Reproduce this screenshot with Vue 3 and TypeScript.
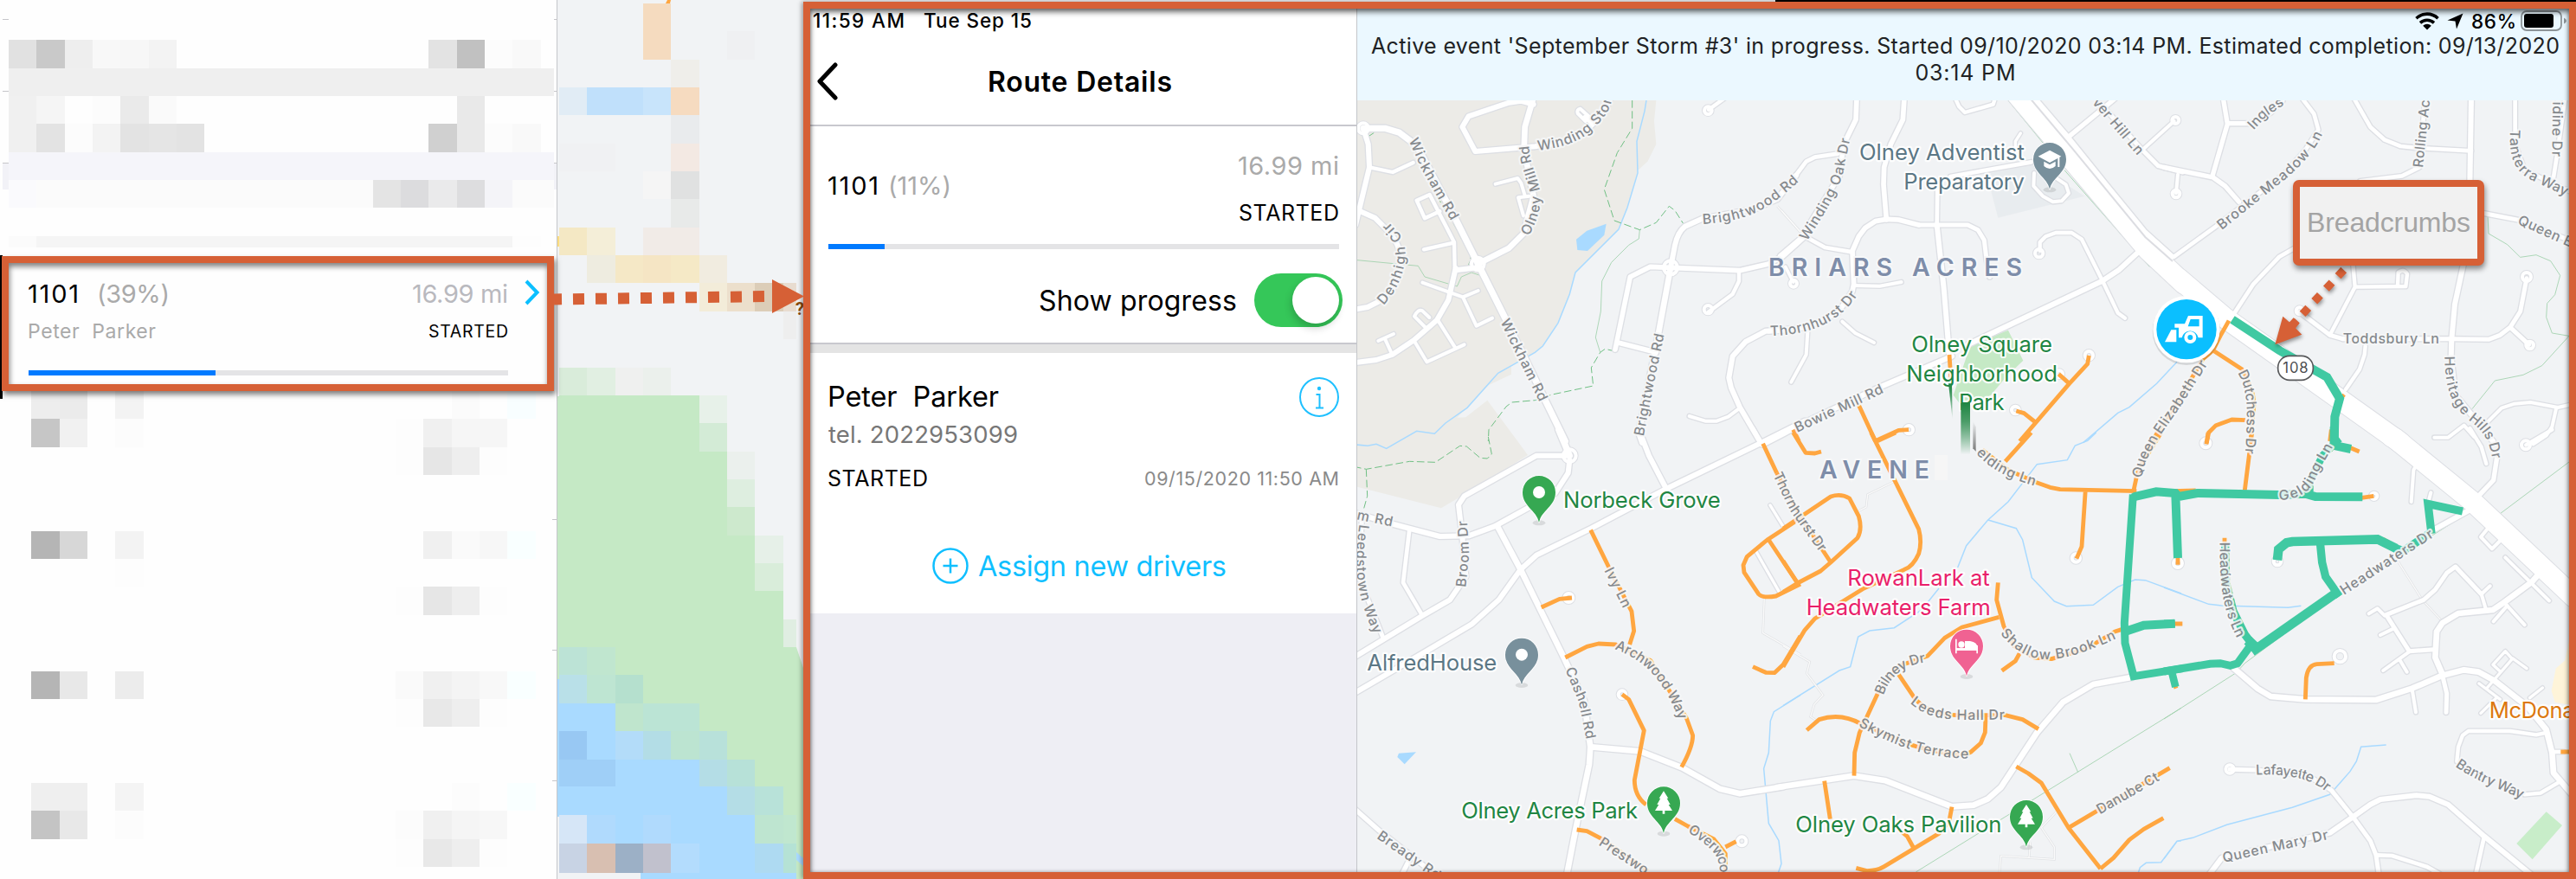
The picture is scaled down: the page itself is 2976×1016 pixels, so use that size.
<script setup lang="ts">
import type { Directive } from 'vue'

type Tile = 'A' | 'B' | 'C' | 'D' | 'E' | 'F'
type Cell = [number, number, number, number, string]

/* Tracks text so that its run is exactly `value` pixels wide. */
const vFit: Directive<HTMLElement, number> = {
  mounted(el, { value }) {
    const n = (el.textContent ?? '').length
    const gap = (value - el.getBoundingClientRect().width) / Math.max(1, n - 1)
    el.style.letterSpacing = `${gap}px`
    el.style.marginRight = `${-gap}px`
  },
}

/* Spreads a street name over the whole of the curve that carries it. */
const vAlong: Directive<SVGTextElement, string> = {
  mounted(el, { value }) {
    const line = document.getElementById(value) as unknown as SVGPathElement | null
    if (!line) return
    const n = (el.textContent ?? '').trim().length
    const gap = (line.getTotalLength() - el.getComputedTextLength()) / n
    el.style.letterSpacing = `${Math.max(-5, Math.min(6, gap))}px`
  },
}

/* The map is drawn in sheets, three units to a pixel. */
const origin: Record<Tile, [number, number]> = {
  A: [1560, 0], B: [2060, 0], C: [2500, 0],
  D: [1560, 500], E: [2060, 500], F: [2500, 500],
}
const at = (t: Tile) => `translate(${origin[t][0]} ${origin[t][1]}) scale(.33333)`

const roads: [Tile, number, string][] = [
  ['A', 22, 'M45,445L120,445 170,460 230,505 360,750 440,910 540,1110 745,1530'],
  ['A', 18, 'M45,445L62,500 66,580 30,730 18,780'],
  ['A', 13, 'M66,580L147,597 218,564'],
  ['A', 18, 'M24,728L85,755 130,800Q175,850 175,900Q170,960 145,1005L100,1045 60,1065 20,1072'],
  ['A', 20, 'M632,348L605,440 602,520 635,680 600,810 550,860 442,915'],
  ['A', 18, 'M635,362L590,350 550,356 410,403 388,440 433,525 640,508 760,490 830,440 880,390 900,345'],
  ['A', 12, 'M840,432L812,405M815,420L788,393 Q784,380 797,377L828,405'],
  ['A', 12, 'M503,638L580,618 592,635 605,678M620,680L582,685 600,748'],
  ['A', 18, 'M365,937L440,928'],
  ['A', 13, 'M362,930L360,840 275,675 230,695 258,757 310,733M255,865L358,842'],
  ['A', 18, 'M365,930L340,1040 300,1110 220,1180 145,1230 90,1248 20,1257'],
  ['A', 12, 'M250,980L390,1030 443,1008M390,1030L437,1130 492,1103M300,1105L365,1208M220,1180L265,1255 395,1195M262,1137L222,1097Q235,1070 250,1078L274,1101M143,1225L120,1175M97,1182L150,1158'],
  ['A', 18, 'M1110,928L1125,850Q1135,805 1160,785L1220,758 1400,725 1480,690 1545,608'],
  ['A', 17, 'M1110,928L1350,938 1450,915 1500,888 1570,825'],
  ['A', 17, 'M1110,928L1040,925 970,960 918,1212M925,1187L1060,1222'],
  ['A', 20, 'M1110,928L1060,1200 1000,1500 1012,1535'],
  ['A', 13, 'M1347,938L1347,975 1325,1020 1240,1083'],
  ['A', 13, 'M1242,380L1295,342'],
  ['A', 11, 'M1508,925L1535,978'],
  ['A', 18, 'M1500,1145L1440,1148 1370,1185 1325,1235 1312,1310 1320,1345 1350,1412 1425,1540'],
  ['A', 12, 'M1175,1443L1230,1460 1270,1460 1310,1445 1350,1415'],
  ['B', 14, 'M30,628L50,600 80,560 110,545 190,533'],
  ['B', 17, 'M-10,888L60,828 195,610 210,500 252,415 255,340'],
  ['B', 12, 'M85,1150L80,1230 28,1325M205,1115L250,1155 315,1188'],
  ['B', 17, 'M-50,1148L80,1135 190,1085 240,1010 245,985 240,870 262,820 285,790 320,767 360,760 400,762 470,780'],
  ['B', 15, 'M470,780L640,780 675,797 697,833 705,900 716,960'],
  ['B', 12, 'M245,990L335,992 410,978'],
  ['B', 14, 'M240,874L145,858 85,825'],
  ['B', 17, 'M358,762L348,640 350,580 373,500 415,415 420,340'],
  ['B', 14, 'M533,780L535,640M580,612L860,562'],
  ['B', 18, 'M533,780L557,1000 577,1240'],
  ['B', 13, 'M596,340L610,370 630,390 728,362 735,340'],
  ['B', 10, 'M805,510L805,490 823,462'],
  ['B', 12, 'M870,600L868,645 900,680 935,700 965,697 990,670 980,640 950,620'],
  ['B', 13, 'M890,870L890,840 910,820 945,807 1000,807 1035,830 1105,970 1160,1085 1185,1103'],
  ['B', 18, 'M-70,1541L0,1505 60,1472 340,1340 585,1235M640,1195L1105,975 1165,935 1230,875'],
  ['B', 16, 'M868,335L985,472 1120,640 1255,805 1350,890'],
  ['B', 16, 'M985,478L1150,342'],
  ['B', 15, 'M1100,360L1245,520 1300,575 1385,597'],
  ['C', 14, 'M25,892L35,890 180,785 420,600 490,520 535,450 520,395 478,340'],
  ['C', 16, 'M0,580L170,615 212,645 260,700M168,610L220,430 205,340M220,428L300,428 370,390 410,350'],
  ['C', 12, 'M-70,515L35,420M48,605L42,670'],
  ['C', 14, 'M655,335L715,440 765,485 820,507 880,513 1065,523'],
  ['C', 18, 'M1065,340L1060,640'],
  ['C', 14, 'M905,340L885,580 825,610 680,628'],
  ['C', 14, 'M1217,340L1217,500 1250,590 1410,665M1390,340L1362,540 1350,615'],
  ['C', 15, 'M1100,738L1230,763 1410,835'],
  ['C', 14, 'M450,862L400,890 310,985 238,1095'],
  ['C', 13, 'M655,915L662,995 575,1162M662,995L838,993 843,950Q830,930 812,945L810,990'],
  ['C', 15, 'M470,1082L575,1162 620,1175'],
  ['C', 15, 'M620,1175L1000,1175 1125,1177 1165,1162 1200,1135 1235,1080 1257,965M1200,1135L1265,1195'],
  ['C', 18, 'M1038,915L1008,1055 997,1175 995,1240 1010,1370 1080,1455 1140,1530'],
  ['C', 13, 'M698,1200L695,1230 678,1280 630,1350'],
  ['C', 12, 'M937,1517L985,1517 1040,1475 1075,1515M1110,1475L1170,1415 1215,1400 1270,1395 1365,1413 1410,1403M1360,1413L1345,1480 1325,1510 1280,1540'],
  ['D', 22, 'M760,80L722,-10'],
  ['D', 18, 'M760,80L645,80 395,220 375,250 388,360 400,500 345,580 250,635 15,778'],
  ['D', 18, 'M760,95L755,140 710,210 600,270 500,325 410,358 310,360 150,318 20,280'],
  ['D', 14, 'M205,335L183,520 250,635'],
  ['D', 15, 'M40,300L30,500 115,715'],
  ['D', 20, 'M510,325L590,475 740,780 810,930 832,1090 828,1150 780,1380 750,1535'],
  ['D', 18, 'M1575,-40L1425,35 1095,195 835,332 645,425 590,475 515,580 420,665 260,760 15,903M1000,-10L1035,80 1095,195'],
  ['D', 20, 'M835,1090L1005,1105 1150,1162 1280,1235 1350,1252 1500,1228'],
  ['D', 16, 'M15,1305L100,1380 290,1530M205,1480L180,1530'],
  ['D', 14, 'M1395,-15L1425,38'],
  ['D', 10, 'M1405,410L1485,550M1455,252L1500,325'],
  ['E', 20, 'M-20,1230L245,1190 355,1207 585,1297 660,1292 710,1270 755,1230 880,1040 970,935 1075,873 1210,848'],
  ['F', 16, 'M1155,80L1142,165 1090,220'],
  ['F', 13, 'M1255,43L1345,-10M1060,-15L1100,50 1117,108'],
  ['F', 12, 'M885,95L865,130 857,240M918,235L925,208'],
  ['F', 18, 'M930,340L1060,268'],
  ['F', 12, 'M1120,335L1098,362 1137,403 1165,375M1183,433L1335,583'],
  ['F', 20, 'M1295,495L1275,518 1180,588 1140,615 1020,627 965,660 945,690 940,780 965,838'],
  ['F', 12, 'M1180,590L1250,667M1190,600L1142,655M1115,610L1100,560M1100,560L1130,532M710,628L740,610 765,635M795,680L750,702M850,760L760,825M818,790L842,830'],
  ['F', 15, 'M1100,560L1010,465 980,487 940,545 900,580 770,632L850,758 935,752'],
  ['F', 20, 'M240,815L325,888 370,915 490,925 735,927 860,887 965,842 1040,823 1090,830 1145,860 1260,950 1325,1030 1345,1110 1350,1180 1410,1250'],
  ['F', 12, 'M860,890L873,970'],
  ['F', 15, 'M965,842L980,905 978,970'],
  ['F', 10, 'M1120,885L1207,785 1183,758 1140,805 1165,828M1207,782L1257,818M1092,870L1165,925M1098,973L1150,922M1268,920L1312,885'],
  ['F', 13, 'M1318,1042L1290,1048 1200,1035 1055,1035 1035,1050 1020,1090 1015,1140M1250,1255L1305,1250 1365,1215M1350,1107L1385,1107'],
  ['F', 15, 'M228,1168L320,1170 500,1190 580,1240 655,1333 715,1415 735,1465 745,1535'],
  ['F', 18, 'M155,1535L200,1475 575,1388 655,1333 715,1290 750,1272 875,1258 920,1262 985,1290 1110,1400 1275,1535'],
  ['F', 14, 'M735,1465L790,1467 910,1505 955,1530M1110,1400L1080,1535'],
]

const highway: [Tile, string][] = [
  ['B', 'M812,330L1265,868 1390,985'],
  ['C', 'M50,965L215,1105 610,1385 820,1535'],
  ['F', 'M790,15L800,20 1070,240 1420,570'],
]

/* Turning circles at the ends of cul-de-sacs and roundabouts: x, y, radius. */
const circles: [Tile, number, number, number][] = [
  ['A', 45, 445, 18], ['A', 442, 915, 22], ['A', 1110, 928, 24], ['A', 1240, 383, 13],
  ['A', 1240, 1073, 14], ['A', 1536, 983, 12], ['B', 887, 878, 14], ['B', 1060, 1232, 14],
  ['B', 436, 1490, 14], ['B', 957, 1297, 12], ['B', 805, 1422, 13], ['C', 40, 417, 12],
  ['C', 42, 672, 13], ['C', 470, 1078, 12], ['C', 1257, 960, 15], ['C', 1268, 1197, 13],
  ['D', 760, 80, 22], ['D', 757, 573, 15], ['D', 942, 908, 13], ['D', 1357, 1417, 15],
  ['E', 1015, 435, 14], ['F', 48, 453, 15], ['F', 393, 447, 13], ['F', 728, 220, 11],
  ['F', 145, 37, 15], ['F', 1254, 43, 15], ['F', 228, 1167, 14], ['F', 610, 776, 20],
]

const footpaths: [Tile, string][] = [
  ['A', 'M1480,715L1560,805'], ['B', 'M-5,730L65,810'],
  ['D', 'M1435,570L1430,695 1560,770'],
  ['E', 'M385,170L293,215 288,258 262,272M0,740L92,795 82,835 138,910 108,942 95,985 125,1005M750,1524L755,1468 940,1480 940,1437 895,1370 950,1312M852,1475L857,1420'],
  ['F', 'M810,445L895,580 960,650'],
]

const water: [Tile, string][] = [
  ['A', 'M1026,348L1020,385 993,490 996,600 960,720 930,795 780,945 760,1020 720,1120 667,1200 640,1222 512,1294 405,1414 330,1467 292,1504 230,1495 125,1555 90,1540 60,1546 20,1542'],
  ['B', 'M1365,1255L1295,1330 1200,1412 1160,1432 1040,1535'],
  ['D', 'M1560,910L1468,968 1456,1000 1450,1110 1433,1165 1450,1355 1485,1415 1494,1495 1482,1530'],
  ['E', 'M0,947L195,825 233,812 260,708 300,687 385,677 480,615 540,540M605,468L635,392 710,303 780,240 880,110 985,95 1012,45 1055,28 1085,0M710,303L808,332 830,372 862,503 940,585 982,602 1075,598 1160,535 1220,510 1255,512 1380,558M1380,1415L1365,1417 1310,1490 1258,1492 1237,1508 1230,1530'],
  ['F', 'M0,537L155,595 200,600 430,607 475,601M770,1083L683,1090 667,1140 645,1175 575,1255 445,1300 218,1360 100,1405 45,1417 0,1478'],
]

const trails: [Tile, string][] = [
  ['A', 'M977,348L977,445 925,530 880,657 915,765 1003,797 1060,772 1105,715 1125,730 1155,777M918,1218L883,1210 866,1222 835,1275 842,1338 700,1368 640,1388 560,1395 540,1410 480,1490 478,1530M60,475L90,455 130,458 165,470 205,500M300,680L355,770 418,890 410,920'],
  ['D', 'M478,15L490,75 475,90 450,88 403,48 380,46 295,103 205,100 55,127 22,120M55,127L59,220 45,270'],
]
const tracks: [Tile, string][] = [
  ['A', 'M1003,797L1000,828 965,850 905,910 872,975 868,1080 850,1170 866,1222M24,902L235,922 258,960 370,993 385,960 420,945 450,955 530,1115'],
  ['B', 'M780,348L900,495M975,590L1270,925'],
  ['C', 'M1122,745L1125,810 1190,848 1235,892 1290,884 1340,905 1373,955 1355,1022 1328,1052 1325,1100 1345,1155 1404,1165 1310,1268 1245,1300 1147,1320 1068,1418M190,1120L560,1372 590,1382'],
  ['E', 'M1380,955L460,1524M993,1112L1022,1178'],
  ['F', 'M1404,102L1160,285M1060,275L590,570 280,800 250,833 0,993M1165,378L1395,590'],
]

const route: [Tile, string][] = [
  ['B', 'M260,1400L320,1530M318,1530L400,1492 435,1490M35,1490L55,1530M576,1230L582,1320M1060,1233L1055,1262 992,1330 820,1530M955,1297L992,1330M808,1425L835,1433 878,1467'],
  ['C', 'M225,1112L195,1165 170,1215 135,1245 50,1390 -10,1480 -60,1560M170,1215L270,1280Q310,1350 312,1400L300,1530M282,1457L235,1455 180,1475 155,1500 148,1535M575,1530L580,1490M615,1370L625,1378'],
  ['D', 'M1430,38L1478,140M1540,310L1445,372 1375,430 1362,460 1365,485 1415,560Q1430,575 1475,567L1560,525M1450,372L1550,522M1560,705L1500,805 1470,833 1440,832 1395,812M833,338L895,465 975,620 983,688 968,735M745,780L820,742 860,732 920,735 1040,790 1165,990 1187,1050Q1187,1090 1148,1160M662,606L725,577 768,573M942,908L965,925 1018,1033 985,1205Q985,1260 1025,1290M1125,1340L1170,1365 1260,1410 1300,1460 1300,1520M1300,1437L1337,1418M785,1377L820,1382 870,1408 1030,1520'],
  ['E', 'M35,0L78,70 110,72 132,66M305,0L470,335Q482,380 470,420Q450,465 420,475L280,540 110,645 75,685 0,812M325,30L390,0M-22,140L60,290 165,450M0,333L165,222Q200,210 230,228L262,290Q275,335 258,365L165,450 130,480 50,522 0,553M0,445L50,522'],
  ['E', 'M770,100L860,0M690,60L780,130 870,170 925,190 960,197 1225,203M1048,197L1035,395 1017,437M1215,200L1230,130 1310,0M745,520L740,580 765,672 800,740 870,780 930,785 1050,750 1150,690 1175,682M748,640L620,675 560,712 500,775 400,810 330,900 265,1040 248,1110 246,1190M400,838L455,920Q500,975 600,980L770,980 830,995 885,1028M702,985L700,1040 685,1077 650,1108Q610,1130 450,1085L270,1010Q200,970 125,995L82,1032M820,765L805,792 758,826'],
  ['E', 'M143,1208L163,1340M585,1298L575,1350 540,1390 350,1505Q325,1520 290,1520L253,1510M452,1440L430,1400 400,1375M808,1158L850,1182 895,1215 990,1372 1100,1512M990,1370L1340,1163M1100,1512L1145,1475 1200,1412 1250,1375 1318,1337'],
  ['F', 'M153,0L147,40M305,0L280,200M677,66L640,50M685,226L727,220M30,203L110,201M48,425L48,458M210,365L210,390M35,663L64,663M490,925L493,850Q500,805 530,803L590,800M36,870L42,887M760,370L790,388M1375,1107L1410,1107'],
]

const breadcrumbs: [Tile, number, string][] = [
  ['C', 30, 'M237,1108L400,1215 565,1308 609,1382 592,1445 590,1535'],
  ['F', 30, 'M590,-20L590,45 648,57M590,20L605,40'],
  ['F', 26, 'M590,40L550,80 505,170 505,205'],
  ['F', 30, 'M-107,226L-100,222 -27,205 40,210 50,222 115,210 400,216 490,212 525,222 688,223M40,215L48,435'],
  ['E', 27, 'M1213,215L1183,660 1185,730 1215,845 1385,818'],
  ['E', 30, 'M1185,690L1250,668 1358,662'],
  ['E', 26, 'M1347,830L1360,882'],
  ['F', 27, 'M0,828L160,802 195,800 230,808 255,800 300,738M0,663L38,663'],
  ['F', 28, 'M212,385L215,520 240,620 280,700 318,750'],
  ['F', 36, 'M290,720L320,748'],
  ['F', 32, 'M305,760L603,552'],
  ['F', 28, 'M608,568L560,500 548,450 540,370'],
  ['F', 32, 'M393,442L397,405 425,382 445,378 740,370 805,402'],
  ['F', 28, 'M800,400L830,410 920,350M927,350L915,247 1035,273'],
]

const streets: [Tile, string, string][] = [
  ['A', 'Wickham Rd', 'M218,480L262,580 365,760'],
  ['A', 'Wickham Rd', 'M535,1108L672,1390'],
  ['A', 'Winding Stor', 'M648,505C740,495 800,470 840,425C870,395 885,370 890,340'],
  ['A', 'Olney Mill Rd', 'M604,812C640,740 650,700 635,640C620,590 605,560 602,505'],
  ['A', 'Denhigh Cir', 'M102,1048C160,990 195,880 160,825L118,778'],
  ['A', 'Brightwood Rd', 'M1220,760C1380,750 1440,710 1545,615'],
  ['A', 'Brightwood Rd', 'M1000,1510L1035,1330 1072,1155'],
  ['B', 'Winding Oak Dr', 'M68,828C130,730 190,640 198,560L216,478'],
  ['B', 'Thornhurst Dr', 'M-45,1148C80,1145 180,1110 245,1012'],
  ['B', 'Bowie Mill Rd', 'M42,1485L345,1345'],
  ['B', 'ver Hill Ln', 'M1083,345L1242,530'],
  ['F', 'Queen Elizabeth Dr', 'M-95,155L-78,90 -40,20 50,-110 138,-248'],
  ['C', 'Ingles', 'M298,440L345,390 410,348'],
  ['C', 'Brooke Meadow Ln', 'M190,785L420,600Q510,520 535,455'],
  ['C', 'Rolling Ac', 'M880,580L905,345'],
  ['C', 'Tanterra Way', 'M1217,450C1210,560 1240,595 1300,618L1400,665'],
  ['C', 'sidine Dr', 'M1365,325L1362,545'],
  ['C', 'Queen E', 'M1230,760L1415,842'],
  ['C', 'Toddsbury Ln', 'M620,1175L955,1175'],
  ['C', 'Dutchess Dr', 'M270,1285C310,1350 308,1430 298,1575'],
  ['C', 'Heritage Hills Dr', 'M990,1235C990,1340 1010,1400 1075,1450C1140,1500 1145,1540 1155,1590'],
  ['F', 'Gelding Ln', 'M398,217C480,215 500,180 520,130L572,38'],
  ['F', 'Headwaters Dr', 'M615,550L930,345'],
  ['F', 'Headwaters Ln', 'M210,380C212,520 215,600 268,705'],
  ['F', 'Lafayette Dr', 'M318,1170C420,1165 510,1180 572,1232'],
  ['F', 'Queen Mary Dr', 'M203,1475L570,1393'],
  ['F', 'Bantry Way', 'M1018,1143C1100,1200 1150,1210 1245,1255'],
  ['E', 'Danube Ct', 'M1090,1310L1298,1190'],
  ['E', 'Leeds Hall Dr', 'M450,925C520,985 570,980 770,978'],
  ['E', 'Skymist Terrace', 'M268,1003C380,1060 470,1110 645,1114'],
  ['E', 'Bilney Dr', 'M332,905C350,850 390,795 492,780'],
  ['E', 'Shallow Brook Ln', 'M765,685C850,790 930,800 1150,698'],
  ['E', 'elding Ln', 'M680,60C740,125 800,145 878,170'],
  ['E', 'Thornhurst Dr', 'M-20,140L40,265 140,405'],
  ['D', 'am Rd', 'M-5,278L150,310'],
  ['D', 'Leedstown Way', 'M48,320C25,480 40,560 98,695'],
  ['D', 'Broom Dr', 'M383,535L395,420 388,305'],
  ['D', 'Ivy Ln', 'M895,470L962,605'],
  ['D', 'Archwood Way', 'M922,735C1040,780 1100,850 1155,992'],
  ['D', 'Cashell Rd', 'M760,815L808,930 835,1062'],
  ['D', 'Overwoo', 'M1178,1370C1250,1420 1300,1450 1297,1525'],
  ['D', 'Prestwo', 'M868,1415L1030,1520'],
  ['D', 'Bready Rd', 'M100,1392L310,1540'],
]

/* Place names: sheet, text, left, right, baseline, colour. */
const places: [Tile, string, number, number, number, string][] = [
  ['B', 'Olney Adventist', 264, 837, 556, '#5b7785'],
  ['B', 'Preparatory', 418, 837, 656, '#5b7785'],
  ['B', 'Olney Square', 445, 933, 1221, '#1f8643'],
  ['B', 'Neighborhood', 427, 951, 1322, '#1f8643'],
  ['B', 'Park', 609, 767, 1421, '#1f8643'],
  ['D', 'Norbeck Grove', 738, 1283, 261, '#1f8643'],
  ['D', 'AlfredHouse', 58, 508, 824, '#5b7785'],
  ['D', 'Olney Acres Park', 385, 996, 1338, '#1f8643'],
  ['E', 'Olney Oaks Pavilion', 43, 757, 1386, '#1f8643'],
  ['E', 'RowanLark at', 223, 716, 531, '#e9206a'],
  ['E', 'Headwaters Farm', 80, 719, 632, '#e9206a'],
  ['F', 'McDona', 1127, 1424, 989, '#dc780e'],
]

const pins: [Tile, number, number, string, string][] = [
  ['D', 654, 207, '#36a852', 'dot'],
  ['D', 594, 770, '#78909c', 'dot'],
  ['D', 1086, 1285, '#36a852', 'tree'],
  ['E', 843, 1332, '#36a852', 'tree'],
  ['E', 636, 740, '#f06292', 'bed'],
  ['B', 924, 552, '#78909c', 'school'],
]

/* Redacted blocks: left, top, width, height, colour. */
const topCells: Cell[] = [
  [10, 46, 32, 33, '#e1e1e1'], [42, 46, 33, 33, '#c9c9c9'], [75, 46, 32, 33, '#eeeeee'], [107, 46, 32, 33, '#f8f8f8'],
  [139, 46, 33, 33, '#f7f7f7'], [172, 46, 32, 33, '#f3f3f3'], [495, 46, 33, 33, '#e3e3e3'], [528, 46, 32, 33, '#c1c1c1'],
  [560, 46, 32, 33, '#fcfcfc'], [592, 46, 33, 33, '#f9f9f9'],
  [10, 79, 630, 32, '#efefef'],
  [10, 111, 32, 65, '#f0f0f0'], [42, 111, 33, 32, '#f5f5f5'], [107, 111, 32, 32, '#fcfcfc'], [139, 111, 33, 32, '#eaeaea'],
  [172, 111, 32, 32, '#fafafa'], [528, 111, 32, 65, '#e9e9e9'],
  [42, 143, 33, 33, '#e3e3e3'], [75, 143, 32, 33, '#fcfcfc'], [107, 143, 32, 33, '#f3f3f3'], [139, 143, 33, 33, '#e3e3e3'],
  [172, 143, 32, 33, '#e5e5e5'], [204, 143, 32, 33, '#e3e3e3'], [495, 143, 33, 33, '#d0d0d0'],
  [560, 143, 32, 33, '#fcfcfc'], [592, 143, 33, 33, '#f9f9f9'],
  [3, 189, 7, 30, '#f2f2f7'], [640, 189, 3, 30, '#f2f2f7'],
  [10, 176, 630, 32, '#f5f5fa'],
  [10, 208, 32, 32, '#fafafd'], [42, 208, 389, 32, '#fbfbfb'], [431, 208, 32, 32, '#e4e4e4'], [463, 208, 32, 32, '#dcdcde'],
  [495, 208, 33, 32, '#eaeaeb'], [528, 208, 32, 32, '#dddddf'], [560, 208, 32, 32, '#f4f4f8'], [592, 208, 48, 32, '#fbfbfb'],
  [10, 273, 32, 13, '#fbfbfb'], [42, 273, 550, 13, '#f5f5f5'], [592, 273, 33, 13, '#fdfdfd'],
  [3, 22, 7, 1, '#c6c6ca'], [3, 105, 7, 1, '#c6c6ca'], [3, 188, 7, 1, '#c6c6ca'],
  [640, 22, 4, 1, '#c6c6ca'], [640, 105, 4, 1, '#c6c6ca'], [640, 188, 4, 1, '#c6c6ca'],
  [0, 295, 3, 1, '#000'],
]
const bottomCells: Cell[] = [
  [0, 452, 3, 9, '#000'],
  [36, 452, 33, 32, '#ededed'], [69, 452, 32, 32, '#ebebeb'], [133, 452, 33, 32, '#f3f3f3'], [522, 452, 32, 32, '#fbfbfb'], [586, 452, 33, 32, '#f8feff'],
  [36, 484, 33, 33, '#c6c6c6'], [69, 484, 32, 33, '#f1f1f1'], [133, 484, 33, 33, '#fcfcfc'],
  [457, 484, 32, 65, '#fdfdfd'], [489, 484, 33, 33, '#f0f0f0'], [522, 484, 32, 33, '#f6f6f6'], [554, 484, 32, 33, '#f6f6f6'],
  [489, 517, 33, 32, '#e6e6e6'], [522, 517, 32, 32, '#eeeeee'], [554, 517, 32, 32, '#fdfdfd'],
  [36, 614, 33, 32, '#b5b5b5'], [69, 614, 32, 32, '#d7d7d7'], [133, 614, 33, 32, '#f3f3f3'],
  [489, 614, 33, 32, '#f0f0f0'], [522, 614, 32, 32, '#fafafa'], [554, 614, 32, 32, '#f7f7f7'], [586, 614, 33, 32, '#f9ffff'],
  [133, 646, 33, 32, '#fdfdfd'],
  [457, 678, 32, 33, '#fdfdfd'], [489, 678, 33, 33, '#e6e6e6'], [522, 678, 32, 33, '#eeeeee'], [554, 678, 32, 33, '#fdfdfd'],
  [36, 776, 33, 32, '#b5b5b5'], [69, 776, 32, 32, '#e8e8e8'], [133, 776, 33, 32, '#ececec'],
  [457, 776, 32, 32, '#fafafa'], [489, 776, 33, 32, '#f0f0f0'], [522, 776, 32, 32, '#f4f4f4'], [554, 776, 32, 32, '#f8f8f8'], [586, 776, 33, 32, '#f9ffff'],
  [457, 808, 32, 32, '#fdfdfd'], [489, 808, 33, 32, '#e8e8e8'], [522, 808, 32, 32, '#eeeeee'], [554, 808, 32, 32, '#fdfdfd'],
  [36, 905, 33, 32, '#efefef'], [69, 905, 32, 32, '#efefef'], [133, 905, 33, 32, '#f4f4f4'], [522, 905, 32, 32, '#fcfcfc'], [586, 905, 33, 32, '#f9ffff'],
  [36, 937, 33, 33, '#c4c4c4'], [69, 937, 32, 33, '#e8e8e8'], [133, 937, 33, 33, '#fcfcfc'],
  [457, 937, 32, 33, '#fcfcfc'], [489, 937, 33, 33, '#f0f0f0'], [522, 937, 32, 33, '#f5f5f5'], [554, 937, 32, 33, '#f7f7f7'],
  [457, 970, 32, 32, '#fdfdfd'], [489, 970, 33, 32, '#e8e8e8'], [522, 970, 32, 32, '#eeeeee'], [554, 970, 32, 32, '#fdfdfd'],
  [638, 600, 6, 1, '#c6c6ca'], [638, 751, 6, 1, '#c6c6ca'], [638, 902, 6, 1, '#c6c6ca'],
]

/* Pixelated overview map: column, row, columns, rows, colour. */
const colX = [646, 678, 711, 743, 775, 808, 840, 872, 905, 920]
const rowY = [4, 36, 69, 101, 133, 166, 198, 230, 263, 295, 327, 360, 392, 425, 457, 489, 522, 554, 586, 619, 651, 683, 716, 748, 780, 813, 845, 878, 909, 942, 975, 1009]
const pixels: Cell[] = [
  [3, 0, 1, 2, '#f5dbbf'], [6, 1, 1, 1, '#eff0f2'], [4, 2, 1, 1, '#efeeea'],
  [0, 3, 1, 1, '#e1ecf5'], [1, 3, 2, 1, '#c0e0fb'], [3, 3, 1, 1, '#c8e4fb'], [4, 3, 1, 1, '#f6dbc0'],
  [4, 4, 1, 1, '#e9ebed'], [0, 5, 2, 1, '#f0f1f3'], [4, 5, 1, 1, '#f3e9e3'], [3, 6, 1, 1, '#f5f5f5'], [4, 6, 1, 1, '#e0e1e1'], [4, 7, 1, 1, '#e8eae9'],
  [0, 8, 1, 1, '#f4e8c4'], [1, 8, 1, 1, '#f4eed8'], [3, 8, 2, 1, '#f1ebe7'],
  [1, 9, 1, 1, '#eeece0'], [2, 9, 1, 1, '#f5e8c6'], [3, 9, 1, 1, '#f5e5c4'], [4, 9, 1, 1, '#f5e9c6'], [5, 9, 1, 1, '#f1ece0'],
  [5, 10, 1, 1, '#f3ecd9'], [6, 10, 1, 1, '#ecdfcc'], [7, 10, 1, 1, '#dccdb8'], [8, 10, 1, 1, '#e8dcd0'], [8, 11, 1, 1, '#eeeeee'],
  [0, 13, 1, 1, '#d9ecda'], [1, 13, 1, 1, '#e1efe2'], [2, 13, 1, 1, '#eff0ef'], [3, 13, 1, 1, '#ebf0ec'],
  [0, 14, 5, 17, '#c5e9c5'], [5, 16, 1, 15, '#c5e9c5'], [6, 19, 1, 12, '#c5e9c5'], [7, 21, 1, 10, '#c5e9c5'], [8, 23, 1, 8, '#c5e9c5'],
  [5, 14, 1, 1, '#e7f1e9'], [5, 15, 1, 1, '#d3ebd6'], [6, 16, 1, 1, '#ebf0ed'], [6, 17, 1, 1, '#deeee0'], [6, 18, 1, 1, '#cde9cd'],
  [7, 19, 1, 1, '#e6f0e8'], [7, 20, 1, 1, '#d9edda'], [8, 22, 1, 1, '#e0eee2'],
  [0, 25, 2, 6, '#a9daff'], [2, 26, 1, 5, '#a9daff'], [3, 27, 2, 4, '#a9daff'], [5, 28, 1, 3, '#a9daff'], [6, 29, 1, 2, '#a9daff'],
  [0, 23, 1, 1, '#bce3d6'], [1, 23, 1, 1, '#c0e6cf'], [0, 24, 1, 1, '#b9e0e8'], [1, 24, 1, 1, '#bee5d2'], [2, 24, 1, 1, '#b5e0ce'],
  [2, 25, 1, 1, '#bfe5cd'], [3, 25, 2, 1, '#bbe4d5'], [0, 26, 1, 1, '#98c8f3'], [2, 26, 1, 1, '#b3dcf9'], [3, 26, 1, 1, '#b3dde6'],
  [4, 26, 1, 1, '#bce4d1'], [5, 26, 1, 1, '#b8e1da'], [0, 27, 2, 1, '#9fcff7'], [5, 27, 1, 1, '#b4dde6'], [6, 27, 1, 1, '#b7e1d8'],
  [6, 28, 1, 1, '#b4dde6'], [7, 28, 1, 1, '#b8e2d9'], [0, 29, 1, 1, '#d6e6f7'], [1, 29, 1, 1, '#b0dafd'], [3, 29, 1, 1, '#b0dafd'],
  [7, 29, 1, 1, '#bee5d0'], [8, 29, 1, 1, '#c0e7cf'], [0, 30, 1, 1, '#c8d3e4'], [1, 30, 1, 1, '#d8bfb1'], [2, 30, 1, 1, '#9cb0c6'],
  [3, 30, 1, 1, '#c1c1cd'], [4, 30, 1, 1, '#b3dcfd'], [7, 30, 1, 1, '#aedaf2'], [8, 30, 1, 1, '#b5e2d5'],
]
</script>

<template>
  <main class="page">
    <section class="list">
      <svg class="blocks" width="644" height="296" viewBox="0 0 644 296" shape-rendering="crispEdges">
        <rect v-for="(c, i) in topCells" :key="i" :x="c[0]" :y="c[1]" :width="c[2]" :height="c[3]" :fill="c[4]" />
      </svg>
      <div class="picked-row">
        <article class="picked">
          <div class="picked-line first">
            <p><span v-fit="59" class="route-id">1101</span><span v-fit="84" class="percent">(39%)</span></p>
            <span v-fit="111" class="miles">16.99 mi</span>
            <svg class="go" width="18" height="30" viewBox="0 0 18 30"><path d="M2,2L14.500,15 2,28" /></svg>
          </div>
          <div class="picked-line second">
            <span v-fit="148" class="driver">Peter&nbsp; Parker</span>
            <span v-fit="92" class="state">STARTED</span>
          </div>
          <div class="bar"><i :style="{ width: '39%' }"></i></div>
        </article>
      </div>
      <svg class="blocks" width="644" height="564" viewBox="0 452 644 564" shape-rendering="crispEdges">
        <rect v-for="(c, i) in bottomCells" :key="i" :x="c[0]" :y="c[1]" :width="c[2]" :height="c[3]" :fill="c[4]" />
      </svg>
    </section>

    <svg class="overview" width="284" height="1016" viewBox="644 0 284 1016">
      <g shape-rendering="crispEdges">
        <rect v-for="(c, i) in pixels" :key="i" :x="colX[c[0]]" :y="rowY[c[1]]"
          :width="colX[c[0] + c[2]] - colX[c[0]]" :height="rowY[c[1] + c[3]] - rowY[c[1]]" :fill="c[4]" />
        <rect x="644" y="458" width="2" height="327" fill="#c5e9c5" />
        <rect x="644" y="785" width="2" height="159" fill="#a9daff" />
        <rect x="644" y="273" width="2" height="12" fill="#fbdc80" />
        <rect x="740" y="1009" width="188" height="7" fill="#a9daff" />
      </g>
      <path d="M920,748L928,772V1016H920Z" fill="#c5e9c5" />
      <path d="M920,985L928,992V1001L920,994Z" fill="#a9daff" />
      <path d="M769,4L771,0H775L774,4Z" fill="#ffa640" />
      <text x="919" y="364" class="scrap">?</text>
    </svg>

    <section class="detail">
      <div class="strip"></div>
      <div class="frame">
        <aside class="panel">
          <header class="clock">
            <span v-fit="106">11:59 AM</span><span v-fit="125" class="date">Tue Sep 15</span>
          </header>
          <nav class="title">
            <svg class="back" width="26" height="44" viewBox="0 0 26 44"><path d="M22,3L4,22 22,41" /></svg>
            <h1 v-fit="213">Route Details</h1>
          </nav>
          <div class="summary">
            <p><span v-fit="59" class="route-id">1101</span><span v-fit="73" class="percent">(11%)</span></p>
            <div class="numbers">
              <span v-fit="117" class="miles">16.99 mi</span>
              <span v-fit="116" class="state">STARTED</span>
            </div>
          </div>
          <div class="bar"><i :style="{ width: '11%' }"></i></div>
          <label class="toggle-row">
            <span v-fit="229">Show progress</span>
            <span class="toggle"><b></b></span>
          </label>
          <div class="gap"></div>
          <div class="card">
            <div class="who">
              <span v-fit="198">Peter&nbsp; Parker</span>
              <svg width="46" height="46" viewBox="0 0 46 46" class="info">
                <circle cx="23" cy="23" r="22" />
                <circle cx="23" cy="13" r="2.200" class="point" />
                <path d="M19.500,20H23.500V35.500M19,35.500H28" />
              </svg>
            </div>
            <div class="tel"><span v-fit="219">tel. 2022953099</span></div>
            <div class="when">
              <span v-fit="116" class="state">STARTED</span>
              <span v-fit="225" class="stamp">09/15/2020 11:50 AM</span>
            </div>
            <div class="assign">
              <svg width="42" height="42" viewBox="0 0 42 42"><circle cx="21" cy="21" r="19.500" /><path d="M12.500,21H29.500M21,12.500V29.500" /></svg>
              <span v-fit="287">Assign new drivers</span>
            </div>
          </div>
        </aside>

        <div class="map-side">
          <header class="banner">
            <div class="tray">
              <svg width="28" height="21" viewBox="0 0 28 21">
                <g fill="none" stroke="#000" stroke-width="3.600"><path d="M1.500,7.200A18,18 0 0 1 26.500,7.200" /><path d="M6,12.300A12,12 0 0 1 22,12.300" /></g>
                <path d="M14,20.500L9.200,15.700A7,7 0 0 1 18.800,15.700Z" />
              </svg>
              <svg width="19" height="19" viewBox="0 0 19 19"><path d="M18.500,.5L11,18.500 9.500,9.500 .5,8.500Z" /></svg>
              <span v-fit="52">86%</span>
              <svg width="54" height="24" viewBox="0 0 54 24">
                <rect x="1" y="1" width="46" height="22" rx="6" fill="none" stroke="#8d9498" stroke-width="1.800" />
                <rect x="4" y="4" width="34" height="16" rx="3" />
                <path d="M50,8.500Q53,10 53,12T50,15.500Z" fill="#8d9498" />
              </svg>
            </div>
            <p><span v-fit="1373">Active event 'September Storm #3' in progress. Started 09/10/2020 03:14 PM. Estimated completion: 09/13/2020</span></p>
            <p><span v-fit="116">03:14 PM</span></p>
          </header>

          <svg class="map" width="1400" height="892" viewBox="1568 116 1400 892">
            <defs>
              <linearGradient id="smear" x1="0" y1="0" x2="0" y2="1"><stop offset="0" stop-color="#1f8643" /><stop offset=".35" stop-color="#4a9c67" /><stop offset="1" stop-color="#1f8643" stop-opacity="0" /></linearGradient>
              <linearGradient id="smear-grey" x1="0" y1="0" x2="0" y2="1"><stop offset="0" stop-color="#777" stop-opacity="0" /><stop offset="1" stop-color="#777" /></linearGradient>
              <path v-for="(s, i) in streets" :id="'street-' + i" :key="i" :d="s[2]" />
            </defs>
            <rect x="1568" y="116" width="1400" height="892" fill="#f1f3f5" />
            <path :transform="at('A')" fill="#ecebe7" d="M24,348H1060L1053,420 1060,500 1030,560 997,590 960,720 930,795 780,945 760,1020 720,1120 667,1200 620,1235 558,1265V1298L480,1335 370,1448 400,1447 475,1388 580,1530 615,1578 470,1670 315,1762 24,1688Z" />
            <path :transform="at('B')" fill="#e8ecef" d="M720,660L720,600 870,570 1045,680 745,755Z" />
            <path :transform="at('B')" fill="#c5e9c5" d="M650,1195L780,1145 832,1250 770,1310 720,1370 620,1410 590,1370Z" />
            <path :transform="at('F')" fill="#fef4d9" d="M1410,690L1390,790 1358,818 1343,895 1355,935 1410,945Z" />
            <path :transform="at('F')" fill="#c8edc9" d="M1325,1315L1380,1362 1277,1480 1222,1425Z" />
            <path :transform="at('A')" fill="#a9daff" d="M783,830L820,800 887,776 880,815 822,870 787,867Z" />
            <path :transform="at('D')" fill="#a9daff" d="M168,1112L228,1108 188,1150 163,1125Z" />
            <g class="water"><path v-for="(p, i) in water" :key="i" :transform="at(p[0])" :d="p[1]" /></g>
            <g class="tracks"><path v-for="(p, i) in tracks" :key="i" :transform="at(p[0])" :d="p[1]" /></g>
            <g class="trails"><path v-for="(p, i) in trails" :key="i" :transform="at(p[0])" :d="p[1]" /></g>
            <g class="foot-edge"><path v-for="(p, i) in footpaths" :key="i" :transform="at(p[0])" :d="p[1]" /></g>
            <g class="foot"><path v-for="(p, i) in footpaths" :key="i" :transform="at(p[0])" :d="p[1]" /></g>
            <g class="casing">
              <path v-for="(p, i) in roads" :key="i" :transform="at(p[0])" :stroke-width="p[1] + 8" :d="p[2]" />
              <circle v-for="(c, i) in circles" :key="'c' + i" :transform="at(c[0])" :cx="c[1]" :cy="c[2]" :r="c[3]" stroke-width="18" />
              <path v-for="(p, i) in highway" :key="'h' + i" :transform="at(p[0])" stroke-width="76" :d="p[1]" />
            </g>
            <g class="surface">
              <path v-for="(p, i) in highway" :key="'h' + i" :transform="at(p[0])" stroke-width="70" :d="p[1]" />
              <path v-for="(p, i) in roads" :key="i" :transform="at(p[0])" :stroke-width="p[1]" :d="p[2]" />
              <circle v-for="(c, i) in circles" :key="'c' + i" :transform="at(c[0])" :cx="c[1]" :cy="c[2]" :r="c[3]" stroke-width="12" />
            </g>
            <g class="median"><path :transform="at('B')" d="M851,335L1000,512 1255,822 1350,906" /></g>
            <g class="route"><path v-for="(p, i) in route" :key="i" :transform="at(p[0])" :d="p[1]" /></g>
            <g class="crumbs"><path v-for="(p, i) in breadcrumbs" :key="i" :transform="at(p[0])" :stroke-width="p[1]" :d="p[2]" /></g>

            <g class="streets">
              <text v-for="(s, i) in streets" :key="i" v-along="'street-' + i" :transform="at(s[0])" dy=".35em"><textPath :href="'#street-' + i">{{ s[1] }}</textPath></text>
            </g>
            <g class="areas">
              <text x="2043" y="318.500" textLength="293">BRIARS ACRES</text>
              <text x="2102" y="552.500" textLength="127">AVENE</text>
            </g>
            <rect x="2235" y="526" width="15" height="29" fill="#f6f6f6" />
            <g class="places">
              <text v-for="(p, i) in places" :key="i" :transform="at(p[0])" :x="p[2]" :y="p[4]" :textLength="p[3] - p[2]" :fill="p[5]">{{ p[1] }}</text>
            </g>
            <path :transform="at('B')" fill="url(#smear)" d="M573,1330H585L587,1455Z" />
            <rect :transform="at('B')" x="616" y="1398" width="32" height="178" fill="url(#smear)" />
            <path :transform="at('B')" fill="url(#smear-grey)" d="M658,1460L668,1480V1565L658,1555Z" />

            <g v-for="(p, i) in pins" :key="'p' + i" :transform="at(p[0]) + ` translate(${p[1]} ${p[2]})`">
              <ellipse cy="106" rx="22" ry="9" fill="#000" opacity=".1" />
              <path d="M0,105C-8,62 -57,50 -57,0A57,57 0 1 1 57,0C57,50 8,62 0,105Z" :fill="p[3]" stroke="#fff" stroke-width="5" paint-order="stroke" />
              <circle v-if="p[4] === 'dot'" r="21" fill="#fff" />
              <path v-else-if="p[4] === 'tree'" fill="#fff" d="M0,-42L16,-17H11L23,5H17L30,26H4V37H-4V26H-30L-17,5H-23L-11,-17H-16Z" />
              <g v-else-if="p[4] === 'bed'" fill="#fff">
                <path d="M-39,-24H-34V15H34V26H39V-2H34V8H-34V26H-39Z" /><circle cx="-18" cy="-5" r="11" /><path d="M-34,8H39V15H-34ZM-6,-17H12Q37,-14 39,8H-6Z" />
              </g>
              <g v-else fill="#fff">
                <path d="M0,-31L40,-10 0,12 -40,-10Z" /><path d="M-20,8L0,19 20,8V24Q0,42 -20,24Z" /><path d="M28,-6H34V27H28Z" />
              </g>
            </g>

            <g :transform="at('C')">
              <rect x="395" y="1234" width="122" height="84" rx="40" fill="#fff" stroke="#58595b" stroke-width="5" />
              <text x="456" y="1294" class="shield" textLength="88">108</text>
            </g>
            <g :transform="at('C')" class="plow">
              <circle cx="78" cy="1148" r="118" fill="#000" opacity=".12" />
              <circle cx="78" cy="1142" r="116" fill="#fff" />
              <circle cx="78" cy="1142" r="104" fill="#0bbfff" />
              <path fill="#fff" d="M3,1186L25,1144H43V1186Z" />
              <path fill="#fff" fill-rule="evenodd" d="M37,1123H72L84,1095H134V1171H119A29,29 0 0 0 62,1171H51V1136H37ZM83,1132H122V1107H92Z" />
              <circle cx="91" cy="1170" r="15" fill="none" stroke="#fff" stroke-width="12" />
            </g>

            <g :transform="at('C')" class="pointer">
              <path d="M623,936L440,1132" stroke-width="28" stroke-dasharray="29 31" />
              <path class="head" d="M385,1195L412,1097 436,1118 452,1103 470,1120 456,1138 478,1160Z" />
            </g>
          </svg>
          <div class="note"><span v-fit="189">Breadcrumbs</span></div>
        </div>
      </div>
    </section>

    <svg class="link" width="290" height="42" viewBox="640 322 290 42">
      <path d="M640,346L890,342.500" stroke-dasharray="9 13 13 13 13 13 13 13 13 13 13 13 13 13 13 13 13 13 13 13 13 40" />
      <path class="head" d="M892,323L929,342.500 892,362Z" />
    </svg>
  </main>
</template>

<style>
body {
  margin: 0;
}
</style>

<style scoped>
.page {
  position: relative;
  display: flex;
  width: 2976px;
  height: 1016px;
  overflow: hidden;
  background: #fff;
  color: #000;
  font-family: Inter, "Liberation Sans", sans-serif;
}
p,
h1 {
  margin: 0;
}
svg {
  display: block;
  flex: none;
}
span {
  white-space: pre;
}

.list {
  width: 643px;
  border-right: 1px solid #c4c6ca;
  background: #fefefe;
  flex: none;
}
.picked-row {
  width: 644px;
  height: 156px;
  background: linear-gradient(90deg, #000 3px, transparent 3px);
}
.picked {
  position: relative;
  box-sizing: border-box;
  width: 638px;
  height: 156px;
  margin-left: 2px;
  padding: 8px 45px 0 23px;
  border: 8px solid #d66036;
  background: #fefefe;
  box-shadow: 2px 4px 6px rgba(0, 0, 0, .5), inset 1px 4px 6px rgba(0, 0, 0, .5);
}
.picked-line {
  display: flex;
  justify-content: space-between;
  align-items: center;
  margin-left: -1px;
}
.picked-line p,
.summary p {
  display: flex;
  align-items: center;
}
.first {
  height: 54px;
}
.second {
  height: 34px;
  margin-bottom: 28px;
}
.go {
  position: absolute;
  left: 596px;
  top: 19px;
}
.go path {
  fill: none;
  stroke: #0bbfff;
  stroke-width: 4;
}
.route-id,
.percent,
.miles {
  font-size: 29px;
}
.first .percent {
  margin-left: 21px;
}
.percent,
.driver,
.miles {
  color: #aaaaaa;
}
.first .miles {
  color: #b9b9be;
}
.driver {
  font-size: 23px;
}
.second .state {
  font-size: 19.500px;
}
.bar {
  height: 6px;
  background: #e4e4e6;
}
.bar i {
  display: block;
  height: 6px;
  background: #007aff;
}

.overview {
  background: #f1f3f5;
}
.scrap {
  fill: #8a4a0c;
  font: 700 20px Roboto, sans-serif;
}

.detail {
  width: 2048px;
  flex: none;
}
.strip {
  height: 2px;
  background: linear-gradient(90deg, #ececee 1123px, #000 1123px);
}
.frame {
  position: relative;
  box-sizing: border-box;
  display: flex;
  width: 2048px;
  height: 1014px;
  border: 8px solid #d66036;
  box-shadow: -2px 0 5px rgba(0, 0, 0, .35);
}
.frame::after {
  content: "";
  position: absolute;
  inset: 0;
  box-shadow: inset 0 4px 6px rgba(0, 0, 0, .55), inset 0 0 4px rgba(0, 0, 0, .3);
}
.panel {
  width: 631px;
  border-right: 1px solid #c4c6ca;
  background: #eeeef4;
  flex: none;
}
.clock {
  display: flex;
  height: 34px;
  padding-left: 3px;
  background: #fff;
  font-size: 22.500px;
  font-weight: 500;
  line-height: 28px;
}
.date {
  margin-left: 22px;
}
.title {
  box-sizing: border-box;
  display: flex;
  align-items: center;
  justify-content: center;
  position: relative;
  height: 102px;
  padding-right: 8px;
  border-bottom: 2px solid #c8c8ce;
  background: #fff;
}
.title h1 {
  font-size: 32px;
  font-weight: 600;
  white-space: pre;
}
.back {
  position: absolute;
  left: 7px;
  top: 28px;
}
.back path {
  fill: none;
  stroke: #000;
  stroke-width: 5;
  stroke-linecap: round;
  stroke-linejoin: round;
}
.summary {
  display: flex;
  align-items: center;
  justify-content: space-between;
  height: 136px;
  padding: 0 20px;
  background: #fff;
}
.summary .percent {
  margin-left: 11px;
}
.numbers {
  display: flex;
  flex-direction: column;
  align-items: flex-end;
  margin-top: 10px;
  line-height: 54px;
}
.numbers .state,
.when .state {
  font-size: 25px;
}
.panel .bar {
  border: solid #fff;
  border-width: 0 20px 0 21px;
}
.toggle-row {
  box-sizing: border-box;
  display: flex;
  align-items: center;
  justify-content: flex-end;
  gap: 20px;
  height: 108px;
  padding: 10px 16px 0 0;
  background: #fff;
  font-size: 32px;
}
.toggle {
  display: flex;
  justify-content: flex-end;
  box-sizing: border-box;
  width: 102px;
  height: 62px;
  padding: 4px;
  border-radius: 31px;
  background: #35c759;
}
.toggle b {
  width: 54px;
  height: 54px;
  border-radius: 50%;
  background: #fff;
  box-shadow: -1px 5px 10px rgba(0, 0, 0, .2);
}
.gap {
  height: 10px;
  border-top: 2px solid #c8c8ce;
  background: #e4e4e4;
}
.card {
  box-sizing: border-box;
  height: 301px;
  padding: 28px 20px 0 20px;
  background: #fff;
}
.who,
.when,
.tel {
  display: flex;
  align-items: center;
  justify-content: space-between;
}
.who {
  height: 46px;
  font-size: 32.500px;
}
.who span {
  margin-top: -2px;
}
.info {
  fill: none;
  stroke: #1fc0ff;
  stroke-width: 2;
}
.info .point {
  fill: #1fc0ff;
  stroke: none;
}
.tel {
  height: 40px;
  padding-left: 1px;
  color: #777;
  font-size: 27.500px;
}
.when {
  height: 61px;
}
.stamp {
  color: #8a8a8a;
  font-size: 21.500px;
}
.assign {
  box-sizing: border-box;
  display: flex;
  align-items: center;
  gap: 11px;
  height: 126px;
  padding: 16px 0 0 121px;
  color: #0fbfff;
  font-size: 32.500px;
}
.assign svg {
  fill: none;
  stroke: #0fbfff;
  stroke-width: 2.500;
}

.map-side {
  position: relative;
  width: 1400px;
  flex: none;
}
.banner {
  height: 106px;
  background: #ebf8ff;
  color: #202224;
  font-size: 25px;
  line-height: 31px;
  text-align: center;
}
.banner p {
  padding-left: 5px;
}
.tray {
  display: flex;
  align-items: center;
  justify-content: flex-end;
  height: 28px;
  padding-right: 2px;
  color: #000;
  font-size: 22.500px;
  font-weight: 500;
}
.tray svg + svg {
  margin-left: 9px;
}
.tray span {
  margin-left: 9px;
}
.tray span + svg {
  margin-left: 5px;
}

.water,
.tracks,
.trails,
.foot,
.foot-edge,
.casing,
.surface,
.median,
.route,
.crumbs {
  fill: none;
}
.water {
  stroke: #a9daff;
  stroke-width: 4.500;
}
.tracks {
  stroke: #9ed0aa;
  stroke-width: 2.500;
}
.trails {
  stroke: #6fbf84;
  stroke-width: 3;
  stroke-dasharray: 26 11;
}
.foot-edge {
  stroke: #dfe1e4;
  stroke-width: 8;
}
.foot {
  stroke: #fafafa;
  stroke-width: 4;
}
.casing {
  stroke: #dddfe4;
  stroke-linecap: round;
  stroke-linejoin: round;
}
.surface {
  stroke: #fff;
  stroke-linecap: round;
  stroke-linejoin: round;
}
.median {
  stroke: #dcdde2;
  stroke-width: 6;
}
.route {
  stroke: #ffa640;
  stroke-width: 14.500;
  stroke-linejoin: round;
}
.crumbs {
  stroke: #40c9a2;
}
.streets {
  fill: #85898d;
  stroke: rgba(246, 247, 248, .85);
  stroke-width: 13px;
  stroke-linejoin: round;
  paint-order: stroke;
  font: 500 48px Inter, sans-serif;
}
.areas {
  fill: #7e8da9;
  stroke: #f7f8f9;
  stroke-width: 4px;
  paint-order: stroke;
  font: 600 28.500px Inter, sans-serif;
}
.places {
  stroke: rgba(255, 255, 255, .9);
  stroke-width: 13px;
  stroke-linejoin: round;
  paint-order: stroke;
  font: 400 77px Inter, sans-serif;
}
.shield {
  fill: #4c4d4f;
  font: 400 50px Inter, sans-serif;
  text-anchor: middle;
}
.pointer {
  filter: drop-shadow(3px 8px 6px rgba(0, 0, 0, .4));
}
.pointer path {
  fill: none;
  stroke: #d66036;
}
.pointer .head {
  fill: #d66036;
  stroke: none;
}
.note {
  position: absolute;
  left: 1081px;
  top: 198px;
  display: flex;
  align-items: center;
  justify-content: center;
  box-sizing: border-box;
  width: 221px;
  height: 99px;
  border: 8px solid #d66036;
  border-radius: 7px;
  background: #f1f1f1;
  box-shadow: 1px 4px 6px rgba(0, 0, 0, .45);
  color: #a4a4a4;
  font: 32px "Liberation Sans", sans-serif;
}
.link {
  position: absolute;
  left: 640px;
  top: 322px;
}
.link path {
  fill: none;
  stroke: #d66036;
  stroke-width: 13;
}
.link .head {
  fill: #d66036;
  stroke: none;
}
</style>
